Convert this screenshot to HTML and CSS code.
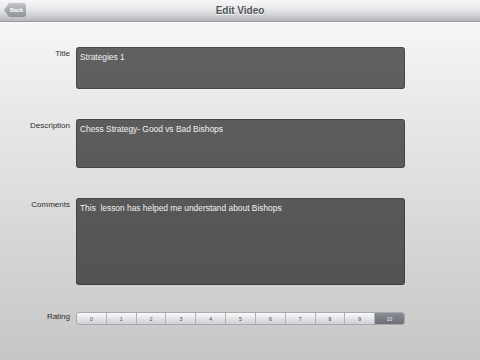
FILE: index.html
```html
<!DOCTYPE html>
<html>
<head>
<meta charset="utf-8">
<link rel="stylesheet" href="styles.css">
</head>
<body>
<div class="navbar">
  <div class="back"><span>Back</span></div>
  <div class="nav-title">Edit Video</div>
</div>
<div class="form">
  <div class="label">Title</div>
  <div class="field f-title">Strategies 1</div>
  <div class="label">Description</div>
  <div class="field f-desc">Chess Strategy- Good vs Bad Bishops</div>
  <div class="label">Comments</div>
  <div class="field f-comm">This&nbsp; lesson has helped me understand about Bishops</div>
  <div class="label l-rating">Rating</div>
  <div class="segmented">
    <div class="seg">0</div><div class="seg">1</div><div class="seg">2</div><div class="seg">3</div><div class="seg">4</div><div class="seg">5</div><div class="seg">6</div><div class="seg">7</div><div class="seg">8</div><div class="seg">9</div><div class="seg sel">10</div>
  </div>
</div>
</body>
</html>
```

FILE: styles.css
```css
html, body {
  margin: 0;
  padding: 0;
  width: 480px;
  height: 360px;
  overflow: hidden;
}
body {
  font-family: "Liberation Sans", Arial, sans-serif;
  background: linear-gradient(#fbfbfb 0, #f0f0f0 60px, #dcdcdc 200px, #c6c6c6 360px);
}
.navbar {
  height: 21px;
  border-bottom: 1px solid #9a9ca2;
  background: linear-gradient(#f7f7f8 0, #e6e7ea 45%, #c9cace 80%, #b4b6bb 100%);
  display: flex;
  align-items: center;
  justify-content: center;
  position: relative;
}
.nav-title {
  font-size: 10px;
  font-weight: bold;
  color: #505257;
  text-shadow: 0 1px 0 #fff;
}
.back {
  position: absolute;
  left: 4px;
  top: 3px;
  height: 14px;
  width: 22px;
  background: linear-gradient(#c3c5ca, #8d9097);
  border-radius: 2px 3px 3px 2px;
  clip-path: polygon(0 50%, 5px 0, 100% 0, 100% 100%, 5px 100%);
  display: flex;
  align-items: center;
  justify-content: center;
}
.back span {
  font-size: 5.5px;
  font-weight: bold;
  color: #fff;
  padding-left: 3px;
}
.form {
  display: grid;
  grid-template-columns: 76px 329px;
  grid-template-rows: 42px 49px 87px 13px;
  row-gap: 30px;
  padding-top: 25px;
}
.label {
  text-align: right;
  padding-right: 6px;
  font-size: 8px;
  color: #2e2e2e;
  padding-top: 2px;
}
.l-rating {
  padding-top: 0;
  margin-top: -3px;
}
.field {
  background: rgba(0, 0, 0, 0.6);
  border: 1px solid rgba(0, 0, 0, 0.25);
  border-radius: 3px;
  color: #f2f2f2;
  font-size: 8.4px;
  padding: 4px 3px;
  box-sizing: border-box;
}
.segmented {
  display: flex;
  margin-top: -3px;
  height: 13px;
  border-radius: 3px;
  overflow: hidden;
  border: 1px solid #a6a8ad;
  box-sizing: border-box;
}
.seg {
  flex: 1;
  display: flex;
  align-items: center;
  justify-content: center;
  font-size: 5px;
  color: #444;
  background: linear-gradient(#fafafb, #dfe0e4 60%, #cfd0d4);
  border-right: 1px solid #b0b2b6;
}
.seg.sel {
  border-right: 0;
  color: #eee;
  background: linear-gradient(#8a8d94, #6b6e75);
}
```
